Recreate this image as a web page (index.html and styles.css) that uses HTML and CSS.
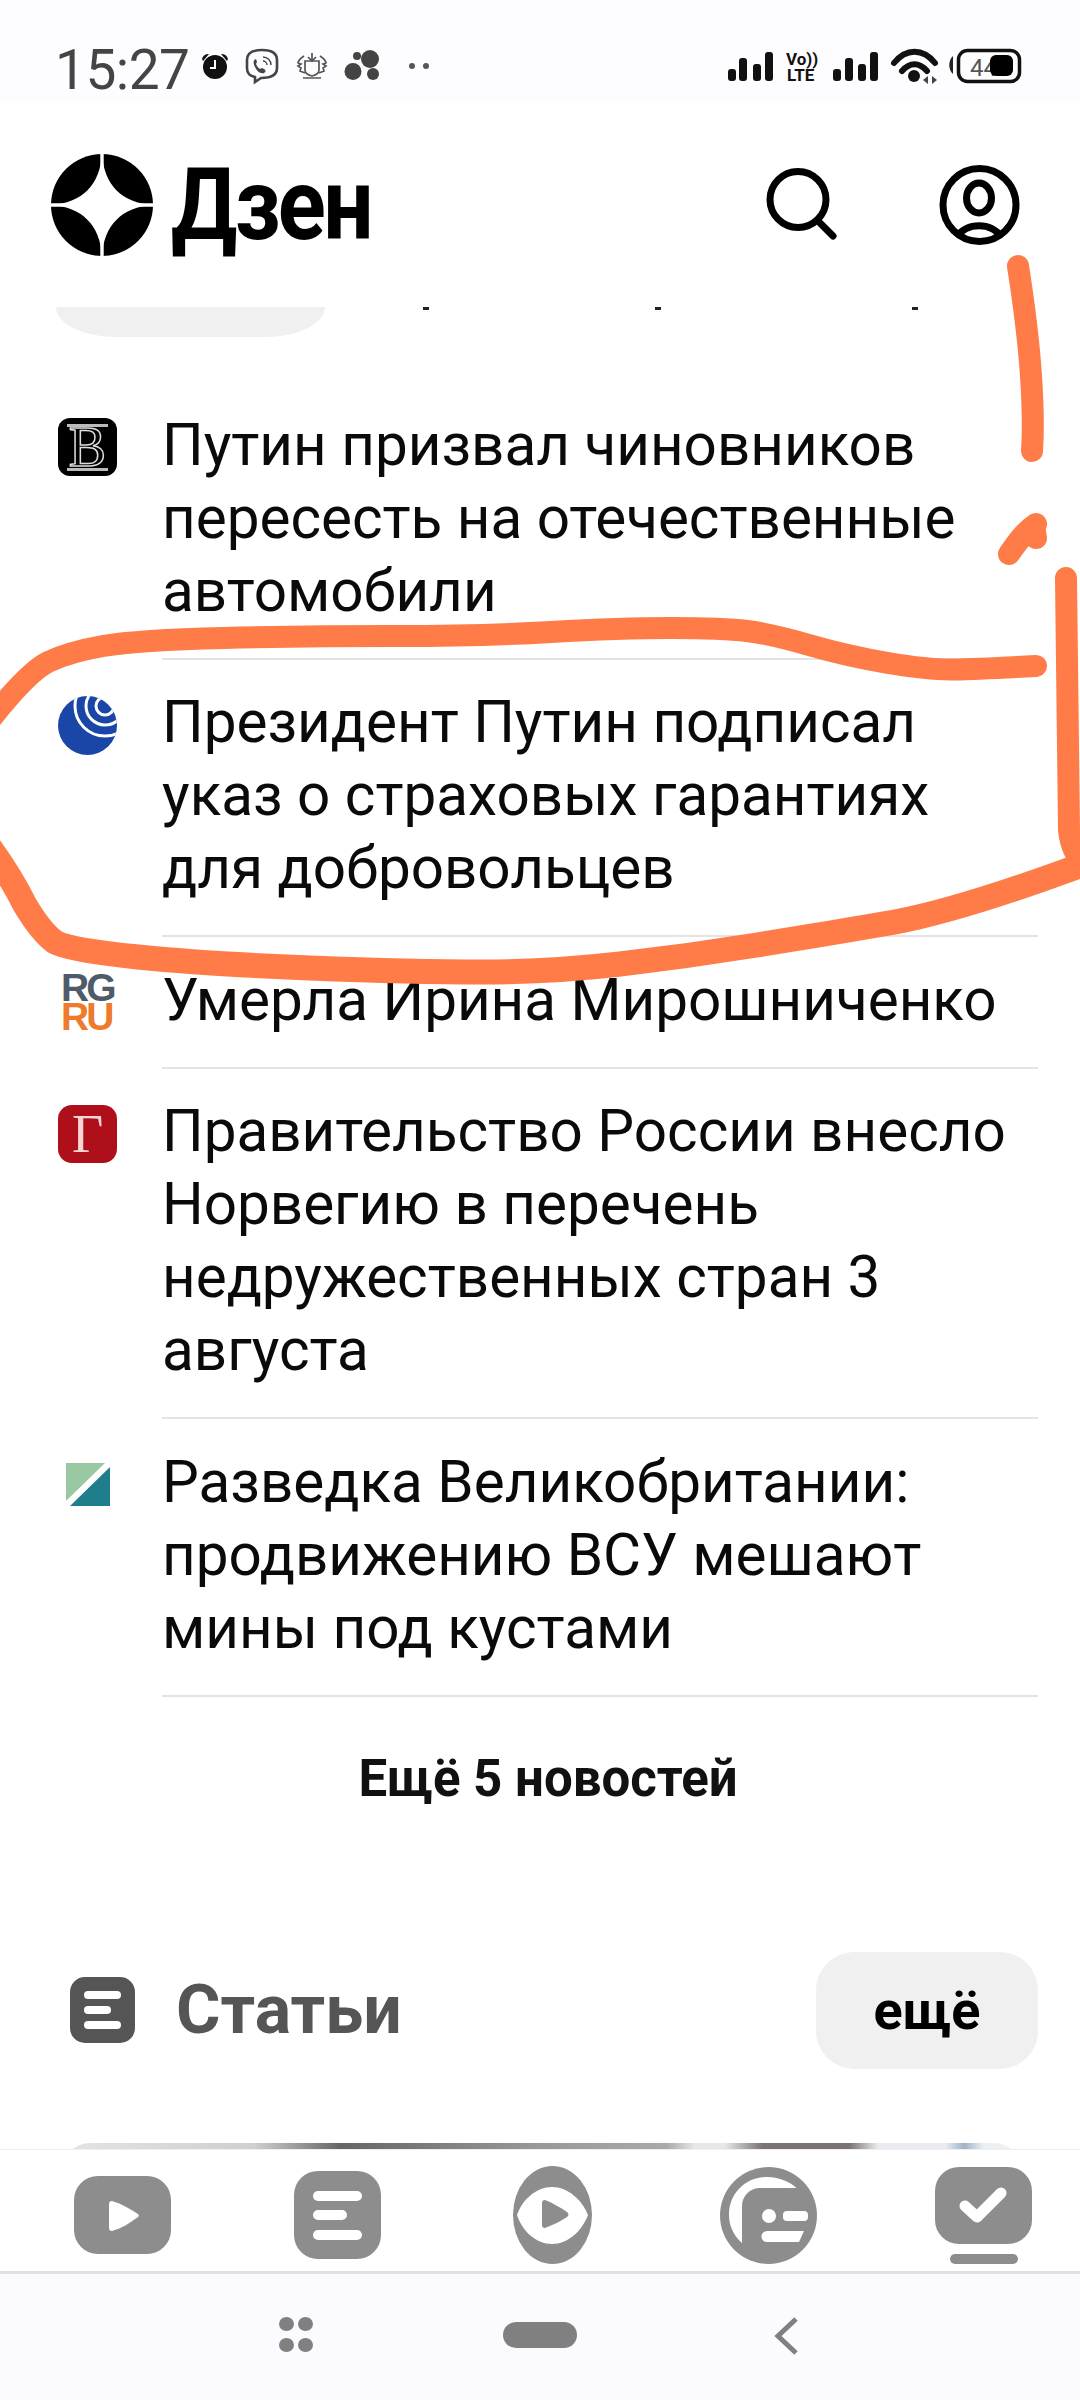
FILE: index.html
```html
<!DOCTYPE html>
<html lang="ru">
<head>
<meta charset="utf-8">
<title>Дзен</title>
<link rel="stylesheet" href="styles.css">
</head>
<body>
<div class="screen">
  <div class="status">
    <span class="clock">15:27</span>
    <svg class="st-left" viewBox="200 40 240 50" width="240" height="50">
      <g fill="#111">
        <circle cx="215" cy="67" r="12"/>
        <path d="M202 59a7 7 0 0 1 7-5l-6 7zM228 59a7 7 0 0 0-7-5l6 7z"/>
      </g>
      <path d="M215 60v8h-5" fill="none" stroke="#fff" stroke-width="2"/>
      <g fill="none" stroke="#444" stroke-width="2.6">
        <path d="M262 50c-8 0-15 2-15 10v8c0 6 3 8 8 9v5l6-4c9 0 16-2 16-10v-8c0-8-7-10-15-10z"/>
        <path d="M256 59c-3 1-3 4-1 8s5 7 9 6c2-1 2-3 0-4l-2-1-2 1c-2-1-3-3-4-5l1-2-1-3z" fill="#444" stroke="none"/>
        <path d="M263 57a8 8 0 0 1 8 8M263 61a4 4 0 0 1 4 4" stroke-width="1.4"/>
      </g>
      <g fill="none" stroke="#555" stroke-width="1.7">
        <path d="M305 70v-9h14v9c0 3-3 5-7 6-4-1-7-3-7-6z"/>
        <path d="M312 53v8M308 57l4 4 4-4"/>
        <path d="M304 56c-3 2-6 5-6 7l3 1-3 2 3 2-1 3 5 2M320 56c3 2 6 5 6 7l-3 1 3 2-3 2 1 3-5 2M303 78h18"/>
      </g>
      <g fill="#444">
        <circle cx="353" cy="71.500" r="8.500"/>
        <circle cx="357" cy="56" r="4"/>
        <circle cx="370" cy="59" r="9"/>
        <circle cx="373" cy="74" r="6"/>
      </g>
      <g fill="#555">
        <circle cx="412" cy="66" r="3"/>
        <circle cx="426" cy="66" r="3"/>
      </g>
    </svg>
    <svg class="st-right" viewBox="725 44 300 42" width="300" height="42">
      <g fill="#111">
        <rect x="728" y="69" width="8" height="12" rx="3"/>
        <rect x="739" y="58" width="8" height="23" rx="3"/>
        <rect x="753" y="64" width="8" height="17" rx="3"/>
        <rect x="765" y="52" width="8" height="29" rx="3"/>
        <rect x="833" y="69" width="8" height="12" rx="3"/>
        <rect x="845" y="58" width="8" height="23" rx="3"/>
        <rect x="858" y="64" width="8" height="17" rx="3"/>
        <rect x="870" y="52" width="8" height="29" rx="3"/>
        <circle cx="914" cy="76" r="6"/>
      </g>
      <text class="volte" x="786" y="65">Vo))</text>
      <text class="volte" x="787" y="81">LTE</text>
      <path d="M894 63c12-15 29-15 41 0M902 71c8-9 17-9 25 0" fill="none" stroke="#111" stroke-width="6" stroke-linecap="round"/>
      <path d="M928 76v8l-5-4zM932 76v8l5-4z" fill="#444"/>
      <rect x="958.500" y="50.500" width="61" height="31" rx="9" fill="none" stroke="#111" stroke-width="3.500"/>
      <path d="M953 56v18c-5-4-5-14 0-18z" fill="#222"/>
      <text class="batt" x="970" y="76">44</text>
      <rect x="990" y="55" width="23" height="21" rx="6" fill="#000"/>
    </svg>
  </div>

  <header class="top">
    <div class="brand">
      <svg class="logo" viewBox="-51 -51 102 102" width="102" height="102">
        <circle r="51" fill="#000"/>
        <path d="M0-51C2-20 20-2 51 0 20 2 2 20 0 51-2 20-20 2-51 0-20-2-2-20 0-51z" fill="#fff"/>
        <path d="M0-51V51M-51 0H51" stroke="#fff" stroke-width="3.400"/>
      </svg>
      <span class="brand-name">Дзен</span>
    </div>
    <svg class="ic-search" viewBox="765 166 74 74" width="74" height="74" fill="none" stroke="#000" stroke-width="7" stroke-linecap="round">
      <circle cx="798" cy="199.500" r="28"/>
      <path d="M818 221l15 15"/>
    </svg>
    <svg class="ic-user" viewBox="939 165 81 81" width="81" height="81" fill="none" stroke="#000" stroke-width="7">
      <circle cx="979.500" cy="205" r="36.500"/>
      <ellipse cx="979" cy="198" rx="12.500" ry="15"/>
      <path d="M957 237c8-15 36-15 44 0"/>
    </svg>
  </header>

  <main class="feed">
    <div class="stub">
      <div class="stub-pill"></div>
      <i class="tick t-a"></i><i class="tick t-b"></i><i class="tick t-c"></i>
    </div>

    <section class="news">
      <article class="row">
        <div class="src src-b"><span class="src-b-glyph">B</span></div>
        <div class="row-body">Путин призвал чиновников пересесть на отечественные автомобили</div>
      </article>
      <article class="row">
        <div class="src">
          <svg viewBox="0 0 59 59" width="59" height="59">
            <defs><clipPath id="globe"><circle cx="29.500" cy="29.500" r="29.500"/></clipPath></defs>
            <g clip-path="url(#globe)">
              <rect width="59" height="59" fill="#1a46a8"/>
              <g fill="none" stroke="#fff" stroke-width="3">
                <circle cx="47" cy="10" r="9"/>
                <circle cx="47" cy="10" r="19"/>
                <circle cx="47" cy="10" r="30"/>
              </g>
            </g>
          </svg>
        </div>
        <div class="row-body">Президент Путин подписал указ о страховых гарантиях для добровольцев</div>
      </article>
      <article class="row">
        <div class="src src-rg"><span class="rg">RG</span><span class="ru">RU</span></div>
        <div class="row-body">Умерла Ирина Мирошниченко</div>
      </article>
      <article class="row">
        <div class="src src-g"><span>Г</span></div>
        <div class="row-body">Правительство России внесло Норвегию в перечень недружественных стран 3 августа</div>
      </article>
      <article class="row">
        <div class="src">
          <svg class="tri" viewBox="0 0 44 43" width="44" height="43">
            <path d="M0 0h39L0 38z" fill="#9ac8a2"/>
            <path d="M44 4v39H4z" fill="#1f7d8c"/>
          </svg>
        </div>
        <div class="row-body">Разведка Великобритании: продвижению ВСУ мешают мины под кустами</div>
      </article>
    </section>

    <div class="more-news">Ещё 5 новостей</div>

    <div class="sec-head">
      <svg class="sec-ic" viewBox="0 0 65 66" width="65" height="66">
        <rect width="65" height="66" rx="15" fill="#555"/>
        <g fill="#fff">
          <rect x="14" y="14" width="37" height="8" rx="4"/>
          <rect x="14" y="29" width="27" height="8" rx="4"/>
          <rect x="14" y="44" width="37" height="8" rx="4"/>
        </g>
      </svg>
      <h2 class="sec-title">Статьи</h2>
      <div class="sec-more">ещё</div>
    </div>

    <div class="card"></div>
  </main>

  <nav class="tabs">
    <svg class="tab t1" viewBox="74 2176 97 78" width="97" height="78">
      <rect x="74" y="2176" width="97" height="78" rx="24" fill="#8d8d8d"/>
      <path d="M112 2201c10 3 18 8 26 13 1 1 1 2 0 3-8 6-16 11-26 14-2 0-3-1-3-3v-24c0-2 1-3 3-3z" fill="#fff"/>
    </svg>
    <svg class="tab t2" viewBox="294 2171 87 88" width="87" height="88">
      <rect x="294" y="2171" width="87" height="88" rx="24" fill="#8d8d8d"/>
      <g fill="#fff">
        <rect x="313" y="2191" width="49" height="10" rx="5"/>
        <rect x="313" y="2210" width="34" height="10" rx="5"/>
        <rect x="313" y="2230" width="49" height="10" rx="5"/>
      </g>
    </svg>
    <svg class="tab t3" viewBox="513 2166 79 98" width="79" height="98">
      <ellipse cx="552.500" cy="2215" rx="39.500" ry="49" fill="#8d8d8d"/>
      <path d="M552 2187c16 0 30 13 36 28-6 16-20 29-36 29s-30-13-35-29c5-15 19-28 35-28z" fill="#fff"/>
      <path d="M545 2200c8 3 16 8 22 12 2 2 2 3 0 5-6 4-14 8-22 11-2 0-3-1-3-3v-22c0-2 1-3 3-3z" fill="#8d8d8d"/>
    </svg>
    <svg class="tab t4" viewBox="720 2167 97 97" width="97" height="97">
      <ellipse cx="768.500" cy="2215.500" rx="48.500" ry="48.500" fill="#8d8d8d"/>
      <path d="M742 2243C733 2235 729 2225 729 2215C729 2193 746 2177 767 2177C778 2177 789 2181 796.500 2188H760C750 2188 742 2196 742 2206Z" fill="#fff"/>
      <circle cx="769" cy="2216" r="7" fill="#fff"/>
      <rect x="783" y="2211" width="25" height="10" rx="4" fill="#fff"/>
      <path d="M767 2231h37l-5 11h-32a5.500 5.500 0 0 1 0-11z" fill="#fff"/>
    </svg>
    <svg class="tab t5" viewBox="935 2167 97 97" width="97" height="97">
      <rect x="935" y="2167" width="97" height="77" rx="24" fill="#8d8d8d"/>
      <path d="M965 2206l12 11 24-24" fill="none" stroke="#fff" stroke-width="11" stroke-linecap="round" stroke-linejoin="round"/>
      <rect x="950" y="2254" width="68" height="10" rx="5" fill="#8d8d8d"/>
    </svg>
  </nav>

  <div class="sysnav">
    <div class="dots"><i></i><i></i><i></i><i></i></div>
    <div class="home"></div>
    <svg class="back" viewBox="0 0 26 38" width="26" height="38">
      <path d="M23 2L5 19l18 17" fill="none" stroke="#808080" stroke-width="5"/>
    </svg>
  </div>

  <svg class="ink" viewBox="0 0 1080 2400" width="1080" height="2400" fill="none" stroke="#ff7b48" stroke-width="22" stroke-linecap="round" stroke-linejoin="round">
    <path d="M1018 266Q1028 330 1031 376T1032 451"/>
    <path d="M1036 524C1024 532 1016 544 1009 554"/>
    <path d="M1034 526L1036 538"/>
    <path d="M1066 578Q1068 700 1069 830Q1072 858 1090 866"/>
    <path stroke-width="25" d="M1090 862Q964 909 895 922Q826 934 757 945Q689 956 620 964Q551 972 482 972Q413 972 310 968Q207 964 138 957Q69 950 55 942Q41 932 25 905Q10 875 -12 845"/>
    <path d="M-10 720Q28 672 48 662Q69 652 103 646Q138 640 224 638Q310 636 396 636Q482 636 551 632Q620 628 671 628Q723 628 747 631Q771 634 809 645Q847 656 888 663Q930 670 954 669.500Q978 669 1036 666"/>
  </svg>
</div>
</body>
</html>
```

FILE: styles.css
```css
* { box-sizing: border-box; }
html, body { margin: 0; padding: 0; }
body { font-family: Roboto, "Liberation Sans", sans-serif; color: #000; background: #fff; }

.screen {
  position: relative;
  width: 1080px;
  height: 2400px;
  overflow: hidden;
  display: flex;
  flex-direction: column;
  background: #fff;
}

/* status bar */
.status {
  height: 102px;
  flex: none;
  background: #fdfcff;
  display: flex;
  align-items: flex-start;
  padding: 40px 0 0 55px;
}
.clock {
  width: 145px;
  height: 50px;
  margin-top: 5px;
  margin-bottom: -5px;
  font-size: 55px;
  line-height: 50px;
  letter-spacing: -0.500px;
  color: #444;
}
.st-left { display: block; }
.st-right { display: block; margin: 4px 0 0 285px; }
.volte { font: 700 17px Roboto, sans-serif; fill: #111; }
.batt { font: 400 24px Roboto, sans-serif; fill: #555; }

/* header */
.top {
  height: 205px;
  flex: none;
  background: #fff;
  display: flex;
  align-items: flex-start;
  padding: 52px 60px 0 51px;
}
.brand { display: flex; align-items: flex-start; flex: 1; }
.logo { display: block; }
.brand-name {
  margin: 1px 0 0 18px;
  font-size: 100px;
  line-height: 100px;
  font-weight: 700;
  letter-spacing: -3px;
  transform: scaleX(.89);
  transform-origin: left center;
}
.ic-search { display: block; margin-top: 12px; }
.ic-user { display: block; margin: 11px 0 0 100px; }

/* feed */
.feed { flex: 1; min-height: 0; overflow: hidden; }
.stub { height: 75px; display: flex; padding-left: 56px; }
.stub-pill {
  width: 269px;
  height: 30px;
  background: #f0f0f0;
  border-radius: 0 0 60px 60px / 0 0 30px 30px;
}
.tick { display: block; width: 6px; height: 3px; background: #222; }
.t-a { margin-left: 98px; }
.t-b { margin-left: 226px; }
.t-c { margin-left: 251px; }

.row { display: flex; padding: 0 42px 0 58px; }
.src {
  flex: none;
  width: 59px;
  height: 58px;
  margin: 36px 45px 0 0;
}
.src svg { display: block; }
.row-body {
  flex: 1;
  padding: 26.500px 0 30px;
  font-size: 58.400px;
  line-height: 73px;
  color: #0a0a0a;
  border-bottom: 2px solid #e4e4e4;
}
.src-b {
  background: #000;
  border-radius: 12px;
  display: flex;
  align-items: center;
  justify-content: center;
}
.src-b-glyph {
  width: 41px;
  height: 47px;
  text-align: center;
  font: 400 56px/41px "Liberation Serif", serif;
  color: #000;
  -webkit-text-stroke: 1.500px #ddd;
  border-top: 3px solid #bbb;
  border-bottom: 3px solid #bbb;
}
.src-g {
  background: #ae0f1b;
  border-radius: 14px;
  display: flex;
  align-items: center;
  justify-content: center;
  font: 400 54px/58px "Liberation Serif", serif;
  color: #f6d5d5;
}
.src-rg {
  display: flex;
  flex-direction: column;
  padding-left: 3px;
  font: 700 39px/29px "Liberation Sans", sans-serif;
  letter-spacing: -3px;
}
.rg { color: #4f5b68; }
.ru { color: #ee7a2b; }
.tri { margin: 8px 0 0 8px; }

.more-news {
  height: 164px;
  padding: 54px 0 0 16px;
  text-align: center;
  font-size: 51px;
  line-height: 56px;
  font-weight: 700;
  color: #111;
  margin-bottom: 91px;
}
.sec-head {
  display: flex;
  align-items: center;
  height: 117px;
  padding: 0 42px 0 70px;
}
.sec-ic { display: block; flex: none; }
.sec-title {
  flex: 1;
  margin: 0 0 0 41px;
  font-size: 68px;
  line-height: 70px;
  font-weight: 700;
  color: #555;
}
.sec-more {
  width: 222px;
  height: 117px;
  border-radius: 38px;
  background: #f0f0f0;
  display: flex;
  align-items: center;
  justify-content: center;
  font-size: 54px;
  font-weight: 700;
}
.card {
  height: 60px;
  margin: 74px 58px 0 62px;
  border-radius: 28px 28px 0 0;
  background: linear-gradient(90deg, #e4e4e4 0%, #cfcfcf 20%, #b8b8b8 22%, #666 29%, #777 36%, #999 50%, #aaa 63%, #e8e8e8 66%, #e8e8e8 69%, #7a7372 73%, #7a7372 82%, #e8ecf0 85%, #e8ecf0 92%, #9db4c8 94%, #eef0f2 96%);
}

/* bottom tabs */
.tabs {
  height: 125px;
  flex: none;
  background: #fff;
  display: flex;
  align-items: flex-start;
  border-top: 1px solid #eee;
  border-bottom: 3px solid #e1e1e3;
}
.tab { display: block; flex: none; }
.t1 { margin: 26px 0 0 74px; }
.t2 { margin: 21px 0 0 123px; }
.t3 { margin: 16px 0 0 132px; }
.t4 { margin: 17px 0 0 128px; }
.t5 { margin: 17px 0 0 118px; }

/* system nav */
.sysnav {
  height: 126px;
  flex: none;
  background: #fbfaff;
  display: flex;
  align-items: flex-start;
  padding: 43px 0 0 279px;
}
.dots {
  width: 34px;
  display: grid;
  grid-template-columns: 15px 15px;
  gap: 7px 4px;
}
.dots i { display: block; height: 14px; border-radius: 50%; background: #808080; }
.home {
  width: 74px;
  height: 26px;
  margin: 5px 0 0 190px;
  border-radius: 13px;
  background: #808080;
}
.back { display: block; margin-left: 196px; }

/* hand-drawn marker over the screenshot */
.ink { position: absolute; left: 0; top: 0; pointer-events: none; }
```
